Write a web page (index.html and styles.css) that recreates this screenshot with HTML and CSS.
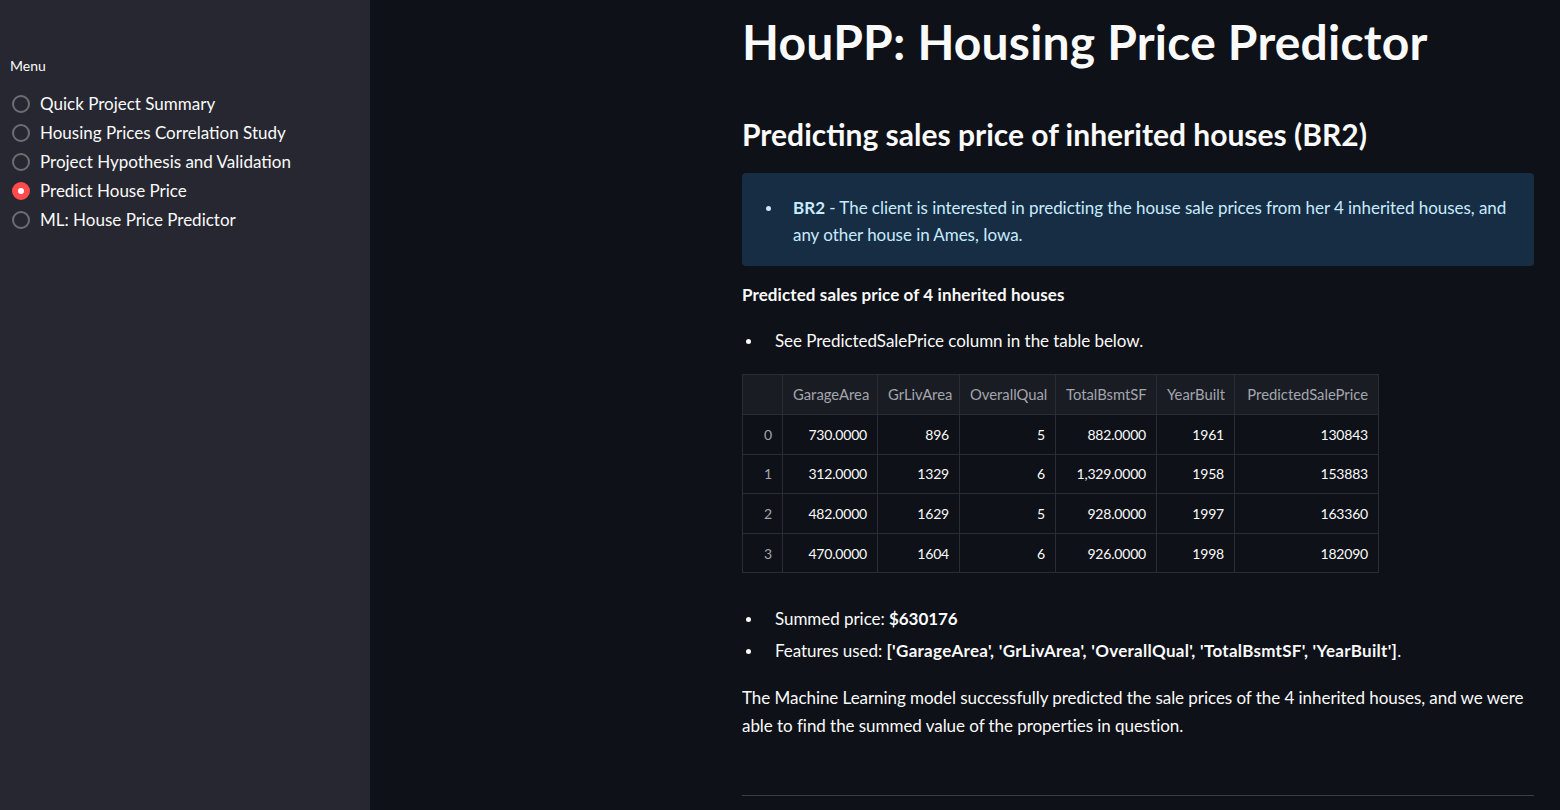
FILE: index.html
```html
<!DOCTYPE html>
<html lang="en">
<head>
<meta charset="utf-8">
<title>HouPP: Housing Price Predictor</title>
<link rel="stylesheet" href="styles.css">
</head>
<body>
<div class="app">
  <aside class="sidebar">
    <div class="menu-label">Menu</div>
    <div class="radio-group">
      <div class="radio"><span class="circle"></span><span class="radio-text">Quick Project Summary</span></div>
      <div class="radio"><span class="circle"></span><span class="radio-text">Housing Prices Correlation Study</span></div>
      <div class="radio"><span class="circle"></span><span class="radio-text">Project Hypothesis and Validation</span></div>
      <div class="radio checked"><span class="circle"></span><span class="radio-text">Predict House Price</span></div>
      <div class="radio"><span class="circle"></span><span class="radio-text">ML: House Price Predictor</span></div>
    </div>
  </aside>
  <main class="main">
    <div class="block">
      <h1 class="title">HouPP: Housing Price Predictor</h1>
      <h2 class="subtitle">Predicting sales price of inherited houses (BR2)</h2>
      <div class="info">
        <ul class="list info-list">
          <li><strong>BR2</strong> - The client is interested in predicting the house sale prices from her 4 inherited houses, and any other house in Ames, Iowa.</li>
        </ul>
      </div>
      <p class="para strong-para"><strong>Predicted sales price of 4 inherited houses</strong></p>
      <ul class="list main-list first-list">
        <li>See PredictedSalePrice column in the table below.</li>
      </ul>
      <table class="df">
        <colgroup>
          <col class="c0"><col class="c1"><col class="c2"><col class="c3"><col class="c4"><col class="c5"><col class="c6">
        </colgroup>
        <thead>
          <tr><th></th><th>GarageArea</th><th>GrLivArea</th><th>OverallQual</th><th>TotalBsmtSF</th><th>YearBuilt</th><th>PredictedSalePrice</th></tr>
        </thead>
        <tbody>
          <tr><th>0</th><td>730.0000</td><td>896</td><td>5</td><td>882.0000</td><td>1961</td><td>130843</td></tr>
          <tr><th>1</th><td>312.0000</td><td>1329</td><td>6</td><td>1,329.0000</td><td>1958</td><td>153883</td></tr>
          <tr><th>2</th><td>482.0000</td><td>1629</td><td>5</td><td>928.0000</td><td>1997</td><td>163360</td></tr>
          <tr><th>3</th><td>470.0000</td><td>1604</td><td>6</td><td>926.0000</td><td>1998</td><td>182090</td></tr>
        </tbody>
      </table>
      <ul class="list main-list second-list">
        <li>Summed price: <strong>$630176</strong></li>
        <li>Features used: <strong class="features">['GarageArea', 'GrLivArea', 'OverallQual', 'TotalBsmtSF', 'YearBuilt']</strong>.</li>
      </ul>
      <p class="para closing">The Machine Learning model successfully predicted the sale prices of the 4 inherited houses, and we were able to find the summed value of the properties in question.</p>
      <hr class="rule">
    </div>
  </main>
</div>
</body>
</html>
```
FILE: styles.css
```css
* { box-sizing: border-box; }
html, body {
  margin: 0;
  padding: 0;
  height: 100%;
  overflow: hidden;
  background: #0e1117;
  color: #fafafa;
  font-family: Lato, "Noto Sans", sans-serif;
}
.app {
  display: flex;
  height: 810px;
}
.sidebar {
  width: 370px;
  flex: none;
  background: #262730;
  padding: 56px 0 0 10px;
}
.menu-label {
  font-size: 14px;
  line-height: 20px;
  height: 20px;
  letter-spacing: 0;
}
.radio-group {
  margin-top: 13px;
  display: flex;
  flex-direction: column;
}
.radio {
  display: flex;
  align-items: center;
  height: 29px;
}
.circle {
  width: 18px;
  height: 18px;
  border-radius: 50%;
  border: 2px solid #6d6e75;
  margin-left: 2px;
  margin-right: 10px;
  flex: none;
  display: flex;
  align-items: center;
  justify-content: center;
}
.radio.checked .circle {
  background: #ff4b4b;
  border-color: #ff4b4b;
}
.radio.checked .circle::after {
  content: "";
  width: 6px;
  height: 6px;
  border-radius: 50%;
  background: #ffffff;
}
.radio-text {
  font-size: 17px;
  line-height: 22px;
  letter-spacing: 0;
}
.main {
  flex: 1;
  padding-left: 372px;
}
.block {
  width: 792px;
}
.title {
  margin: 13px 0 0 0;
  font-size: 48px;
  line-height: 58px;
  font-weight: 700;
  letter-spacing: 0.2px;
}
.subtitle {
  margin: 45px 0 0 0;
  font-size: 30px;
  line-height: 36px;
  font-weight: 700;
  letter-spacing: 0;
}
.info {
  margin-top: 21px;
  background: #172d43;
  border-radius: 4px;
  padding: 21px 16px 18px 16px;
  color: #c7ebff;
}
.list {
  list-style: none;
  margin: 0;
  padding: 0;
}
.list li {
  font-size: 17px;
  line-height: 27px;
  letter-spacing: -0.05px;
}
.list li::before {
  content: "";
  display: inline-block;
  width: 5px;
  height: 5px;
  border-radius: 50%;
  background: currentColor;
  vertical-align: 3px;
}
.info-list li {
  padding-left: 35px;
  text-indent: -27px;
}
.info-list li::before {
  margin-right: 22px;
}
.main-list li {
  padding-left: 33px;
  text-indent: -29px;
}
.main-list li::before {
  margin-right: 24px;
}
.info-list strong { font-weight: 700; letter-spacing: 0; }
.features { letter-spacing: 0.3px; }
.para {
  margin: 0;
  font-size: 17px;
  line-height: 27px;
  letter-spacing: -0.05px;
}
.strong-para { margin-top: 15px; letter-spacing: 0.1px; }
.first-list { margin-top: 19px; }
.df {
  margin-top: 20px;
  border-collapse: collapse;
  table-layout: fixed;
  width: 636px;
  font-size: 14px;
  letter-spacing: -0.2px;
}
.c0 { width: 40px; }
.c1 { width: 95px; }
.c2 { width: 82px; }
.c3 { width: 96px; }
.c4 { width: 101px; }
.c5 { width: 78px; }
.c6 { width: 144px; }
.df th, .df td {
  border: 1px solid #2b2d34;
  height: 39.6px;
  padding: 0 10px;
  text-align: right;
  font-weight: 400;
  white-space: nowrap;
}
.df thead th {
  height: 40px;
  background: #1a1c23;
  color: #a3a6ad;
  padding: 0 10px 1px 10px;
  font-size: 14.8px;
  letter-spacing: 0;
}
.df tbody th {
  color: #a3a6ad;
}
.df tbody td {
  color: #fafafa;
}
.second-list { margin-top: 32px; }
.second-list li + li { margin-top: 5px; }
.closing {
  margin-top: 20px;
  line-height: 28px;
}
.rule {
  margin: 55px 0 0 0;
  border: none;
  height: 1px;
  background: #3b3d44;
}
```
